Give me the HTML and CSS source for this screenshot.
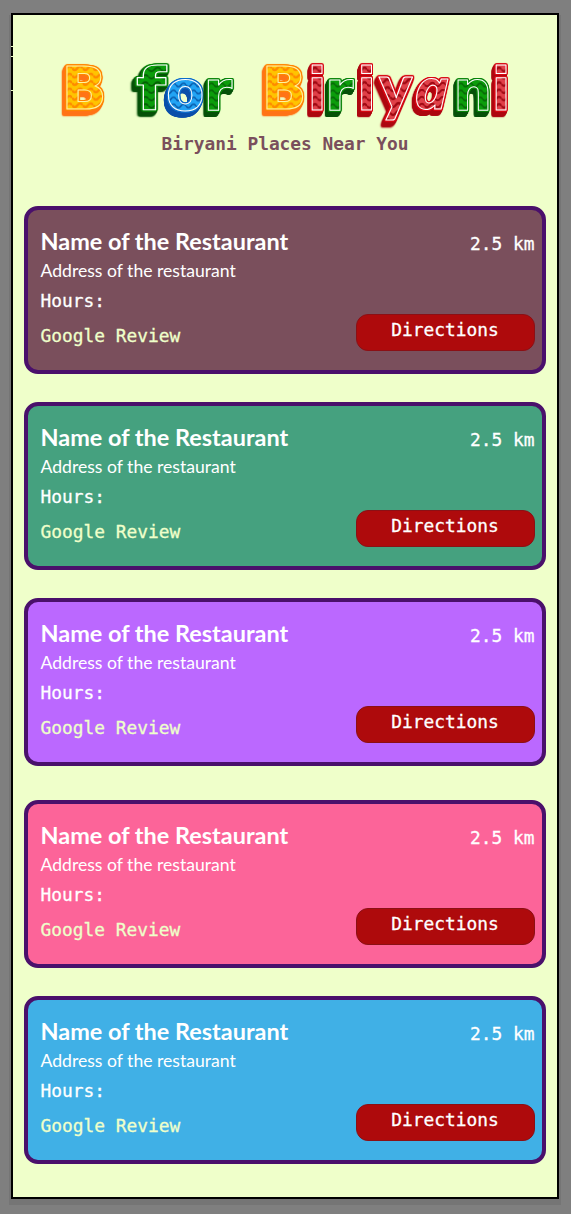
FILE: index.html
```html
<!DOCTYPE html>
<html lang="en">
<head>
<meta charset="utf-8">
<title>B for Biriyani</title>
<link rel="stylesheet" href="styles.css">
</head>
<body>
<main class="screen">
  <i class="tick tick-1"></i><i class="tick tick-2"></i><i class="tick tick-3"></i>
  <header class="header">
    <svg class="logo" width="460" height="76" viewBox="55 55 460 76" role="img" aria-label="B for Biriyani">
      <defs>
        <pattern id="orange" width="10" height="7" patternUnits="userSpaceOnUse"><rect width="10" height="7" fill="#ffc400"/><path d="M0 3.500Q2.500 7 5 3.500T10 3.500" fill="none" stroke="#ff8a00" stroke-width="2.200"/></pattern>
        <pattern id="green" width="10" height="7" patternUnits="userSpaceOnUse"><rect width="10" height="7" fill="#0b9d0b"/><path d="M0 3.500Q2.500 7 5 3.500T10 3.500" fill="none" stroke="#056006" stroke-width="1.600"/></pattern>
        <pattern id="blue" width="10" height="7" patternUnits="userSpaceOnUse"><rect width="10" height="7" fill="#22a4f4"/><path d="M0 3.500Q2.500 7 5 3.500T10 3.500" fill="none" stroke="#0758a8" stroke-width="1.600"/></pattern>
        <pattern id="red" width="10" height="7" patternUnits="userSpaceOnUse"><rect width="10" height="7" fill="#e04048"/><path d="M0 3.500Q2.500 7 5 3.500T10 3.500" fill="none" stroke="#a00812" stroke-width="2"/></pattern>
      </defs>
      <text class="letter orange" transform="translate(61.500 109) scale(1.06 1.06)">B</text>
      <text class="letter green" transform="translate(136 109.500) scale(1.24 1.04)">f</text>
      <text class="letter blue" transform="translate(166 109.500)">o</text>
      <text class="letter green" transform="translate(203.500 109.500) scale(1.04 1)">r</text>
      <text class="letter orange" transform="translate(261.500 109) scale(1.06 1.06)">B</text>
      <text class="letter red" transform="translate(307.500 109.500) scale(1 1.04)">i</text>
      <text class="letter green" transform="translate(325 109.500) scale(1.03 1)">r</text>
      <text class="letter red" transform="translate(357 109.500) scale(1 1.04)">i</text>
      <text class="letter red straight" transform="translate(379 109) scale(1.12 1.13)">y</text>
      <text class="letter red slant" transform="translate(414 109) scale(1.05 1)">a</text>
      <text class="letter green" transform="translate(453.500 109.500) scale(.97 1)">n</text>
      <text class="letter red" transform="translate(491.500 109.500) scale(1 1.04)">i</text>
    </svg>
    <p class="tagline">Biryani Places Near You</p>
  </header>

  <section class="list">
    <article class="card plum">
      <div class="info"><h2>Name of the Restaurant</h2><p class="address">Address of the restaurant</p><p class="hours">Hours:</p><a class="review">Google Review</a></div>
      <div class="side"><span class="distance">2.5 km</span><button class="directions">Directions</button></div>
    </article>
    <article class="card teal">
      <div class="info"><h2>Name of the Restaurant</h2><p class="address">Address of the restaurant</p><p class="hours">Hours:</p><a class="review">Google Review</a></div>
      <div class="side"><span class="distance">2.5 km</span><button class="directions">Directions</button></div>
    </article>
    <article class="card violet">
      <div class="info"><h2>Name of the Restaurant</h2><p class="address">Address of the restaurant</p><p class="hours">Hours:</p><a class="review">Google Review</a></div>
      <div class="side"><span class="distance">2.5 km</span><button class="directions">Directions</button></div>
    </article>
    <article class="card pink">
      <div class="info"><h2>Name of the Restaurant</h2><p class="address">Address of the restaurant</p><p class="hours">Hours:</p><a class="review">Google Review</a></div>
      <div class="side"><span class="distance">2.5 km</span><button class="directions">Directions</button></div>
    </article>
    <article class="card sky">
      <div class="info"><h2>Name of the Restaurant</h2><p class="address">Address of the restaurant</p><p class="hours">Hours:</p><a class="review">Google Review</a></div>
      <div class="side"><span class="distance">2.5 km</span><button class="directions">Directions</button></div>
    </article>
  </section>
</main>
</body>
</html>
```
FILE: styles.css
```css
* { box-sizing: border-box; }
body {
  margin: 0;
  padding: 13px 12px 15px 11px;
  height: 1214px;
  background: #7f7f7f;
  font-family: "DejaVu Sans Mono", monospace;
  overflow: hidden;
}
h2, p { margin: 0; }

.screen {
  position: relative;
  height: 1186px;
  border: 2px solid #000;
  background: #efffca;
  box-shadow: 0 4px 0 2px rgba(0, 0, 0, .08);
}
.tick { position: absolute; left: -2px; width: 2px; height: 1px; background: #efffca; }
.tick-1 { top: 31px; }
.tick-2 { top: 41px; }
.tick-3 { top: 75px; }

.header {
  height: 191px;
  padding-top: 40px;
  display: flex;
  flex-direction: column;
  align-items: center;
}
.logo { display: block; flex: none; overflow: visible; }
.letter {
  font: 700 56px "DejaVu Sans", sans-serif;
  stroke: #fff;
  stroke-width: 1px;
  stroke-linejoin: round;
  filter:
    drop-shadow(1px 0 0 var(--edge)) drop-shadow(-1px 0 0 var(--edge))
    drop-shadow(0 1px 0 var(--edge)) drop-shadow(0 -1px 0 var(--edge))
    drop-shadow(-1px 1px 0 var(--depth)) drop-shadow(-1px 2px 0 var(--depth))
    drop-shadow(-1px 2px 0 var(--depth));
}
.straight { font-family: Lato, sans-serif; font-weight: 900; }
.slant { font-family: "Open Sans", sans-serif; font-style: italic; }
.orange { fill: url(#orange); --edge: #ff8500; --depth: #ff7417; stroke: #fff3a0; }
.green { fill: url(#green); --edge: #078407; --depth: #065108; }
.blue { fill: url(#blue); --edge: #0c6dcb; --depth: #0a4faa; }
.red { fill: url(#red); --edge: #d80712; --depth: #ad0710; }

.tagline {
  margin-top: 2px;
  font-size: 17.85px;
  line-height: 22px;
  font-weight: 700;
  color: #7a4f5c;
}

.list { display: flex; flex-direction: column; gap: 28px; padding: 0 11px; }
.card {
  height: 168px;
  display: flex;
  justify-content: space-between;
  padding: 17px 7.5px 0 12.5px;
  border: 4px solid #4a106b;
  border-radius: 14px;
  color: #fff;
  font-size: 17.85px;
  -webkit-text-stroke: .3px;
}
.plum { background: #7a4f5c; }
.teal { background: #45a17f; }
.violet { background: #bb68ff; }
.pink { background: #fc6499; margin-top: 6px; }
.sky { background: #40b0e6; }

.info { display: flex; flex-direction: column; }
.info h2 { font: 700 23.45px/28px Lato, sans-serif; white-space: nowrap; -webkit-text-stroke: 0; }
.address { font: 400 17.6px/28px Lato, sans-serif; margin-top: 2px; white-space: nowrap; -webkit-text-stroke: 0; }
.hours { line-height: 32px; }
.review { color: #efffca; line-height: 38px; }

.side { display: flex; flex-direction: column; align-items: flex-end; }
.distance { line-height: 32px; padding-top: 1px; }
.directions {
  margin-top: 54px;
  width: 179px;
  height: 37px;
  padding: 0 0 6px;
  border: 1px solid #8b1015;
  border-radius: 12px;
  background: #ae0a0c;
  color: #fff;
  font: 17.85px "DejaVu Sans Mono", monospace;
  -webkit-text-stroke: .3px;
}
```
